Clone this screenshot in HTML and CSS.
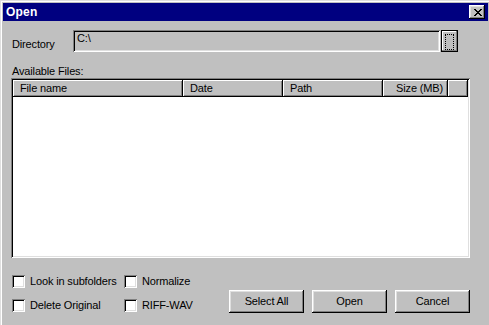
FILE: index.html
```html
<!DOCTYPE html>
<html>
<head>
<meta charset="utf-8">
<title>Open</title>
<link rel="stylesheet" href="styles.css">
</head>
<body>
<div class="window">
  <div class="titlebar">
    <span class="title">Open</span>
    <span class="close-btn">
      <svg width="8" height="7" viewBox="0 0 8 7" shape-rendering="crispEdges"><path d="M0 0h2v1h-2zM6 0h2v1h-2zM1 1h2v1h-2zM5 1h2v1h-2zM2 2h4v1h-4zM3 3h2v1h-2zM2 4h4v1h-4zM1 5h2v1h-2zM5 5h2v1h-2zM0 6h2v1h-2zM6 6h2v1h-2z" fill="#000"/></svg>
    </span>
  </div>
  <div class="content">
    <div class="dir-row">
      <span class="dir-label">Directory</span>
      <div class="dir-field">C:\</div>
      <div class="browse-btn"><span class="focus-rect"></span></div>
    </div>
    <div class="files-label">Available Files:</div>
    <div class="listbox">
      <div class="header">
        <div class="hcell c-name">File name</div>
        <div class="hcell c-date">Date</div>
        <div class="hcell c-path">Path</div>
        <div class="hcell c-size">Size (MB)</div>
        <div class="hcell c-fill"></div>
      </div>
    </div>
    <div class="bottom">
      <div class="checks">
        <label class="check"><span class="box"></span>Look in subfolders</label>
        <label class="check"><span class="box"></span>Normalize</label>
        <label class="check"><span class="box"></span>Delete Original</label>
        <label class="check"><span class="box"></span>RIFF-WAV</label>
      </div>
      <div class="buttons">
        <div class="btn">Select All</div>
        <div class="btn">Open</div>
        <div class="btn">Cancel</div>
      </div>
    </div>
  </div>
</div>
</body>
</html>
```

FILE: styles.css
```css
html, body {
  margin: 0;
  padding: 0;
  background: #c0c0c0;
  overflow: hidden;
}
body {
  width: 489px;
  height: 325px;
  font-family: "Liberation Sans", Arial, sans-serif;
  font-size: 11px;
  line-height: 13px;
  letter-spacing: -0.15px;
  color: #000;
}
.window {
  width: 491px;
  height: 330px;
  box-sizing: border-box;
  padding: 3px;
  background: #c0c0c0;
  box-shadow: inset 1px 1px #dfdfdf, inset -1px -1px #000, inset 2px 2px #fff, inset -2px -2px #808080;
}
.titlebar {
  height: 18px;
  background: #000080;
  display: flex;
  align-items: center;
  justify-content: space-between;
  padding: 0 3px 0 3px;
}
.title {
  color: #fff;
  font-weight: bold;
  font-size: 12px;
  letter-spacing: 0.2px;
}
.close-btn {
  width: 16px;
  height: 14px;
  box-sizing: border-box;
  background: #c0c0c0;
  display: flex;
  align-items: center;
  justify-content: center;
  padding-left: 1px;
  box-shadow: inset -1px -1px #000, inset 1px 1px #fff, inset -2px -2px #808080, inset 2px 2px #dfdfdf;
}
.close-btn svg { display: block; }
.content {
  padding: 9px 0 0 8px;
}
.dir-row {
  display: flex;
  align-items: flex-start;
}
.dir-label {
  width: 61px;
  padding-left: 1px;
  margin-top: 8px;
}
.dir-field {
  width: 367px;
  height: 22px;
  box-sizing: border-box;
  padding: 2px 4px;
  box-shadow: inset 1px 1px #808080, inset -1px -1px #fff, inset 2px 2px #000, inset -2px -2px #dfdfdf;
}
.browse-btn {
  width: 17px;
  height: 22px;
  margin-left: 1px;
  box-sizing: border-box;
  border: 1px solid #000;
  padding: 3px 3px 1px 3px;
  box-shadow: inset -1px -1px #808080, inset 1px 1px #fff;
  display: flex;
}
.focus-rect {
  flex: 1;
  border: 1px dotted #000;
}
.files-label {
  margin-top: 13px;
  padding-left: 1px;
}
.listbox {
  width: 459px;
  height: 180px;
  box-sizing: border-box;
  padding: 2px;
  background: #fff;
  box-shadow: inset 1px 1px #808080, inset -1px -1px #fff, inset 2px 2px #000, inset -2px -2px #dfdfdf;
}
.header {
  display: flex;
  height: 17px;
}
.hcell {
  box-sizing: border-box;
  height: 17px;
  padding: 2px 7px;
  background: #c0c0c0;
  box-shadow: inset -1px -1px #000, inset 1px 1px #fff, inset -2px -2px #808080;
  white-space: nowrap;
}
.c-name { width: 170px; }
.c-date { width: 100px; }
.c-path { width: 100px; }
.c-size { width: 65px; text-align: right; padding-right: 5px; }
.c-fill { flex: 1; }
.bottom {
  display: flex;
  align-items: flex-end;
  justify-content: space-between;
  margin-top: 17px;
  width: 459px;
}
.checks {
  display: grid;
  grid-template-columns: 112px auto;
  row-gap: 11px;
  margin-left: 1px;
}
.check {
  display: flex;
  align-items: center;
  height: 13px;
  white-space: nowrap;
}
.box {
  width: 13px;
  height: 13px;
  box-sizing: border-box;
  background: #fff;
  margin-right: 5px;
  box-shadow: inset 1px 1px #808080, inset -1px -1px #fff, inset 2px 2px #000, inset -2px -2px #dfdfdf;
}
.buttons {
  display: flex;
  gap: 8px;
  margin-bottom: -1px;
}
.btn {
  width: 75px;
  height: 23px;
  box-sizing: border-box;
  display: flex;
  align-items: center;
  justify-content: center;
  box-shadow: inset -1px -1px #000, inset 1px 1px #fff, inset -2px -2px #808080, inset 2px 2px #dfdfdf;
}
```
